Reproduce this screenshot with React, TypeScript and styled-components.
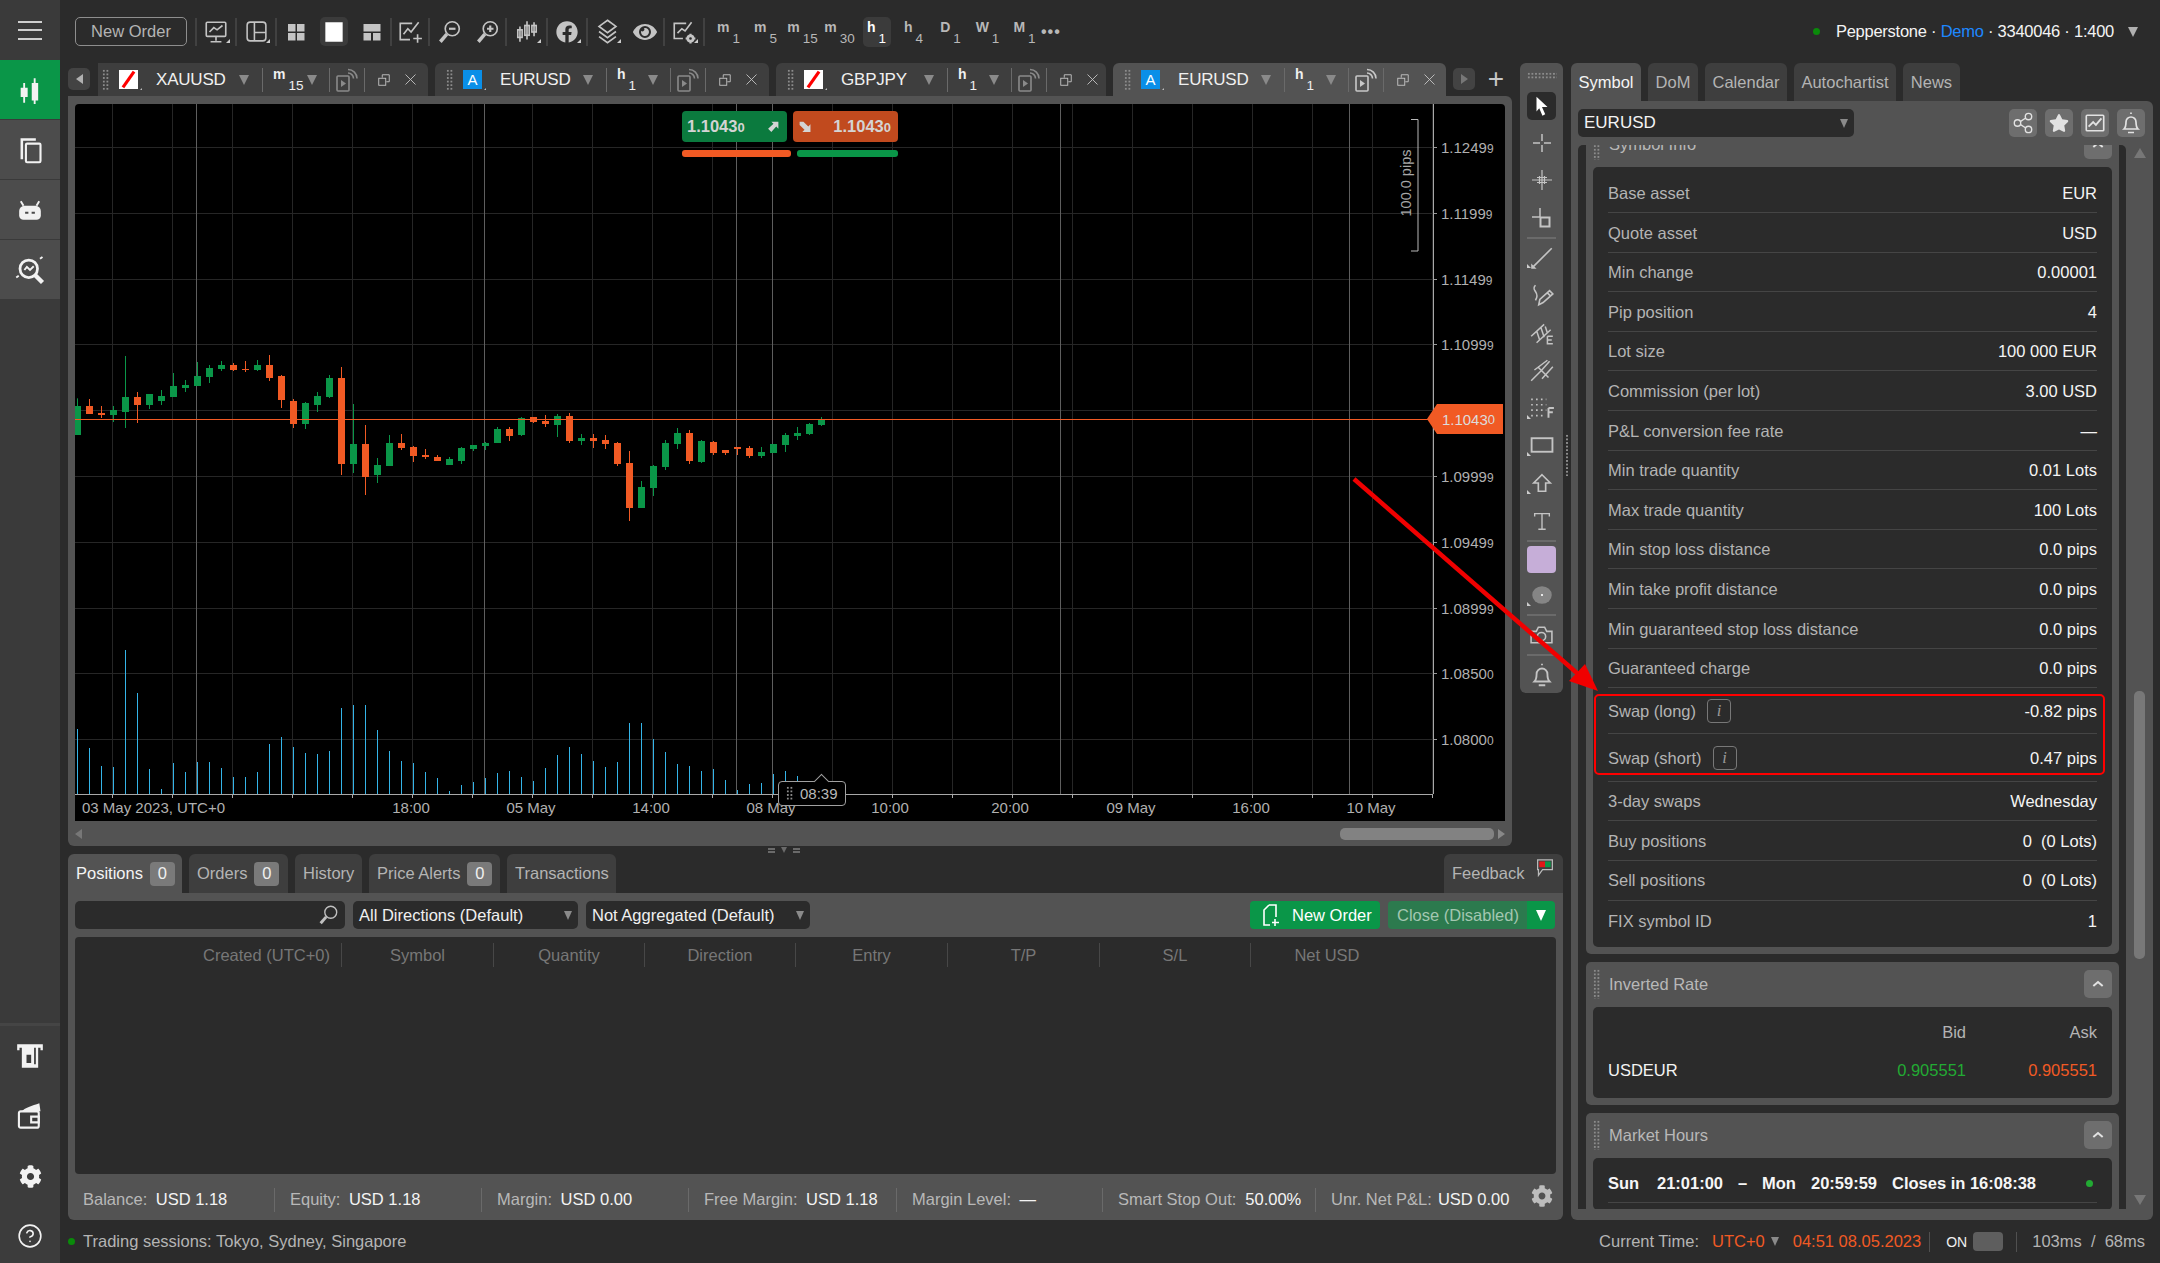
import type { ReactNode } from "react";
import styled, { createGlobalStyle } from "styled-components";
import { FaCog, FaEye, FaFacebook, FaStar } from "react-icons/fa";
import { CircleHelp } from "lucide-react";

const GlobalStyle = createGlobalStyle`
  html, body { margin: 0; padding: 0; background: #2b2b2b; }
  * { box-sizing: border-box; }
  body { font-family: "Liberation Sans", Arial, sans-serif; font-size: 16.5px; color: #b4b4b4; }
`;

const GREEN = "#0a9648";
const ORANGE = "#f15a24";
const PANEL = "#535353";
const DARK = "#2b2b2b";
const TAB = "#3e3e3e";

const Page = styled.div`
  position: relative;
  display: flex;
  width: 2160px;
  height: 1263px;
  overflow: hidden;
  background: ${DARK};
`;

const Overlay = styled.svg`
  position: absolute;
  left: 0;
  top: 0;
  pointer-events: none;
`;

/* ---------- left rail ---------- */
const Rail = styled.nav`
  display: flex;
  flex-direction: column;
  flex: 0 0 60px;
  background: #3a3a3a;
`;
const RailCell = styled.div<{ $bg?: string }>`
  display: flex;
  align-items: center;
  justify-content: center;
  height: 60px;
  color: #f2f2f2;
  background: ${({ $bg }) => $bg ?? "transparent"};
  border-bottom: ${({ $bg }) => ($bg ? "1px solid #3a3a3a" : "none")};
`;
const RailBottom = styled.div`
  margin-top: auto;
  height: 240px;
  border-top: 3px solid #454545;
  background: #3c3c3c;
`;
const Burger = styled.div`
  width: 24px;
  height: 19px;
  border-top: 2px solid #cfcfcf;
  border-bottom: 2px solid #cfcfcf;
  background: linear-gradient(#cfcfcf, #cfcfcf) center / 100% 2px no-repeat;
`;

const Main = styled.div`
  display: flex;
  flex-direction: column;
  flex: 1;
  min-width: 0;
`;

/* ---------- top bar ---------- */
const TopBar = styled.header`
  display: flex;
  align-items: center;
  flex: 0 0 60px;
  padding: 3px 0 0 15px;
`;
const OutlineButton = styled.div`
  display: flex;
  align-items: center;
  justify-content: center;
  flex: 0 0 112px;
  height: 29px;
  margin-right: 8px;
  border: 1px solid #8e8e8e;
  border-radius: 5px;
  color: #b4b4b4;
`;
const ToolSep = styled.span`
  flex: 0 0 2px;
  height: 28px;
  background: #414141;
`;
const ToolIcon = styled.div<{ $w: number; $on?: boolean; $more?: boolean }>`
  position: relative;
  display: flex;
  align-items: center;
  justify-content: center;
  flex: 0 0 ${({ $w }) => $w}px;
  height: 29px;
  color: ${({ $on }) => ($on ? "#ffffff" : "#c4c4c4")};
  ${({ $more }) =>
    $more &&
    `&::after {
      content: "";
      position: absolute;
      right: 5px;
      bottom: 3px;
      border: 2px solid transparent;
      border-right-color: #ccc;
      border-bottom-color: #ccc;
    }`}
  ${({ $on }) =>
    $on &&
    `&::before {
      content: "";
      position: absolute;
      left: 5px;
      right: 5px;
      top: 0;
      bottom: 0;
      border-radius: 5px;
      background: #3b3b3b;
    }
    & > * { position: relative; }`}
`;
const TfRow = styled.div`
  display: flex;
  margin-left: 5px;
`;
const TfCell = styled.div`
  display: flex;
  justify-content: center;
  flex: 0 0 37px;
`;
const TfBox = styled.div<{ $on?: boolean }>`
  display: flex;
  align-items: flex-start;
  justify-content: center;
  width: 28px;
  height: 30px;
  padding-top: 3px;
  border-radius: 5px;
  background: ${({ $on }) => ($on ? "#3b3b3b" : "transparent")};
  color: ${({ $on }) => ($on ? "#ffffff" : "#b8b8b8")};
`;
const TfLetter = styled.span`
  font-size: 14px;
  line-height: 14px;
  font-weight: 700;
`;
const TfNumber = styled.span`
  margin: 12px 0 0 3px;
  font-size: 13.5px;
  line-height: 14px;
`;
const Dots = styled.span`
  margin-left: -2px;
  font-size: 16px;
  font-weight: 700;
  letter-spacing: 1px;
  color: #b8b8b8;
`;
const Account = styled.div`
  display: flex;
  align-items: center;
  gap: 14px;
  margin-left: auto;
  padding-right: 22px;
  color: #f4f4f4;
`;
const AccountText = styled.span`
  margin-left: 2px;
  letter-spacing: -0.25px;
`;
const LiveDot = styled.span<{ $c?: string }>`
  flex: 0 0 auto;
  width: 7px;
  height: 7px;
  border-radius: 50%;
  background: ${({ $c }) => $c ?? "#0a8a0a"};
`;
const Link = styled.span`
  color: #1e88ff;
`;
const Caret = styled.span<{ $c?: string; $s?: number }>`
  flex: 0 0 auto;
  width: 0;
  height: 0;
  border-left: ${({ $s }) => ($s ?? 10) / 2}px solid transparent;
  border-right: ${({ $s }) => ($s ?? 10) / 2}px solid transparent;
  border-top: ${({ $s }) => $s ?? 10}px solid ${({ $c }) => $c ?? "#8a8a8a"};
`;

/* ---------- body ---------- */
const Body = styled.div`
  display: flex;
  flex: 1;
  min-height: 0;
  padding: 3px 7px 0 8px;
`;
const LeftColumn = styled.div`
  display: flex;
  flex-direction: column;
  flex: 0 0 1495px;
`;
const Upper = styled.div`
  display: flex;
  align-items: flex-start;
  gap: 8px;
  flex: 0 0 783px;
`;
const ChartArea = styled.section`
  display: flex;
  flex-direction: column;
  flex: 0 0 1444px;
  height: 783px;
`;
const ChartTabs = styled.div`
  display: flex;
  align-items: flex-end;
  flex: 0 0 33px;
  gap: 7px;
`;
const Pager = styled.div<{ $left?: boolean }>`
  display: flex;
  align-items: center;
  justify-content: center;
  flex: 0 0 22px;
  height: 22px;
  margin: 0 ${({ $left }) => ($left ? 1 : 0)}px 6px 0;
  border-radius: 5px;
  background: #434343;
  &::before {
    content: "";
    border-top: 5px solid transparent;
    border-bottom: 5px solid transparent;
    ${({ $left }) =>
      $left ? "border-right: 7px solid #b0b0b0;" : "border-left: 7px solid #777;"}
  }
`;
const ChartTab = styled.div<{ $w: number; $on?: boolean; $first?: boolean }>`
  display: flex;
  align-items: center;
  flex: 0 0 ${({ $w }) => $w}px;
  height: 33px;
  padding-left: ${({ $first }) => ($first ? 4 : 11)}px;
  border-radius: ${({ $first }) => ($first ? "0 6px 0 0" : "6px 6px 0 0")};
  background: ${({ $on }) => ($on ? PANEL : TAB)};
  color: #f0f0f0;
`;
const Grip = styled.span<{ $w: number; $h: number }>`
  flex: 0 0 auto;
  width: ${({ $w }) => $w}px;
  height: ${({ $h }) => $h}px;
  background-image: radial-gradient(circle, #8c8c8c 1.1px, transparent 1.4px);
  background-size: 3.6px 3.6px;
`;
const SymbolIcon = styled.span<{ $blue?: boolean }>`
  position: relative;
  display: flex;
  align-items: center;
  justify-content: center;
  flex: 0 0 19px;
  height: 19px;
  margin-left: 10px;
  font-size: 15px;
  color: #fff;
  background: ${({ $blue }) => ($blue ? "#0a8fe8" : "#fff")};
  &::after {
    content: "";
    position: absolute;
    right: -4px;
    bottom: -1px;
    border: 1.5px solid transparent;
    border-right-color: #bbb;
    border-bottom-color: #bbb;
  }
`;
const TabName = styled.div`
  display: flex;
  align-items: center;
  justify-content: space-between;
  flex: 0 0 106px;
  margin-left: 18px;
  padding-right: 13px;
  font-size: 17px;
  letter-spacing: -0.2px;
`;
const TabSep = styled.span`
  flex: 0 0 1px;
  height: 24px;
  background: #6a6a6a;
`;
const TabTf = styled.div<{ $w: number }>`
  display: flex;
  align-items: center;
  justify-content: space-between;
  flex: 0 0 ${({ $w }) => $w}px;
  padding: 0 12px 0 10px;
  & > div { width: auto; padding-top: 0; color: #f0f0f0; background: transparent; height: 26px; }
`;
const TabIcon = styled.span<{ $w: number; $dim?: boolean }>`
  display: flex;
  align-items: center;
  justify-content: center;
  flex: 0 0 ${({ $w }) => $w}px;
  color: ${({ $dim }) => ($dim ? "#8a8a8a" : "#c8c8c8")};
`;
const TabPlus = styled.div`
  display: flex;
  align-items: center;
  justify-content: center;
  flex: 0 0 30px;
  height: 22px;
  margin: 0 0 6px -1px;
  font-size: 28px;
  font-weight: 300;
  color: #c8c8c8;
`;

const ChartPanel = styled.div`
  display: flex;
  flex-direction: column;
  flex: 1;
  padding: 8px 7px 0;
  border-radius: 0 6px 6px 6px;
  background: ${PANEL};
`;
const ChartCanvas = styled.div`
  position: relative;
  flex: 0 0 717px;
  background: #000;
  border-radius: 4px 4px 0 0;
  overflow: hidden;
`;
const ChartSvg = styled.svg`
  display: block;
`;
const HScroll = styled.div`
  display: flex;
  align-items: center;
  flex: 1;
`;
const ScrollArrow = styled.span<{ $dir: "l" | "r" | "u" | "d" }>`
  flex: 0 0 auto;
  width: 0;
  height: 0;
  border: 5px solid transparent;
  ${({ $dir }) =>
    $dir === "l"
      ? "border-right: 7px solid #777; border-left-width: 0;"
      : $dir === "r"
        ? "border-left: 7px solid #888; border-right-width: 0;"
        : $dir === "u"
          ? "border-bottom: 10px solid #777; border-top-width: 0; border-left-width: 6px; border-right-width: 6px;"
          : "border-top: 10px solid #777; border-bottom-width: 0; border-left-width: 6px; border-right-width: 6px;"}
`;
const HThumb = styled.span`
  width: 154px;
  height: 12px;
  margin: 0 4px 0 auto;
  border-radius: 5px;
  background: #828282;
`;

const Quote = styled.div<{ $side: "buy" | "sell" }>`
  position: absolute;
  top: 7px;
  left: ${({ $side }) => ($side === "buy" ? 607 : 718)}px;
  display: flex;
  align-items: center;
  justify-content: space-between;
  width: 105px;
  height: 31px;
  padding: 0 7px 0 5px;
  border-radius: 4px;
  background: ${({ $side }) => ($side === "buy" ? "#0b7a3e" : "#c14a1e")};
  color: #d4d4d4;
  font-weight: 700;
  font-size: 16.5px;
`;
const Tiny = styled.span`
  font-size: 13px;
`;
const QuoteBar = styled.span<{ $left: number; $w: number; $c: string }>`
  position: absolute;
  top: 46px;
  left: ${({ $left }) => $left}px;
  width: ${({ $w }) => $w}px;
  height: 7px;
  border-radius: 3px;
  background: ${({ $c }) => $c};
`;
const PriceTag = styled.div`
  position: absolute;
  left: 1352px;
  top: 300px;
  display: flex;
  align-items: center;
  justify-content: flex-end;
  width: 76px;
  height: 30px;
  padding-right: 8px;
  background: ${ORANGE};
  clip-path: polygon(0 50%, 10px 0, 100% 0, 100% 100%, 10px 100%);
  color: #dcdcdc;
  font-size: 15px;
`;
const TimeTip = styled.div`
  position: absolute;
  left: 703px;
  top: 677px;
  display: flex;
  align-items: center;
  gap: 6px;
  width: 68px;
  height: 25px;
  padding-left: 7px;
  border: 1px solid #a0a0a0;
  border-radius: 4px;
  background: #000;
  color: #b8b8b8;
  font-size: 15px;
  &::before {
    content: "";
    position: absolute;
    left: 37px;
    top: -6px;
    width: 10px;
    height: 10px;
    background: #000;
    border-left: 1px solid #a0a0a0;
    border-top: 1px solid #a0a0a0;
    transform: rotate(45deg);
  }
`;

/* ---------- drawing tools ---------- */
const ToolColumn = styled.aside`
  display: flex;
  flex-direction: column;
  align-items: center;
  flex: 0 0 43px;
  height: 630px;
  padding-top: 9px;
  border-radius: 6px;
  background: ${PANEL};
`;
const DrawTool = styled.div<{ $more?: boolean }>`
  position: relative;
  display: flex;
  align-items: center;
  justify-content: center;
  flex: 0 0 37.6px;
  width: 29px;
  color: #c4c4c4;
  ${({ $more }) =>
    $more &&
    `&::after {
      content: "";
      position: absolute;
      left: 0;
      bottom: 8px;
      border: 2.5px solid transparent;
      border-left-color: #ccc;
      border-bottom-color: #ccc;
    }`}
`;
const ActiveTool = styled.div`
  display: flex;
  align-items: center;
  justify-content: center;
  flex: 0 0 28px;
  width: 29px;
  margin: 12px 0 4px;
  border-radius: 5px;
  background: ${DARK};
  color: #fff;
`;
const DrawSep = styled.span`
  flex: 0 0 2px;
  width: 29px;
  background: #6a6a6a;
`;
const Swatch = styled.span`
  flex: 0 0 27px;
  width: 29px;
  margin: 4px 0;
  border-radius: 4px;
  background: #c6aed8;
`;

/* ---------- bottom panel ---------- */
const Splitter = styled.div`
  display: flex;
  align-items: center;
  justify-content: center;
  gap: 6px;
  flex: 0 0 8px;
  padding-right: 64px;
  & > i {
    width: 7px;
    height: 5px;
    border-top: 2px solid #6a6a6a;
    border-bottom: 2px solid #6a6a6a;
  }
`;
const BottomTabs = styled.div`
  display: flex;
  align-items: flex-end;
  flex: 0 0 39px;
  gap: 7px;
`;
const BottomTab = styled.div<{ $w: number; $on?: boolean; $end?: boolean }>`
  display: flex;
  align-items: center;
  flex: 0 0 ${({ $w }) => $w}px;
  gap: 7px;
  height: 39px;
  padding-left: 8px;
  margin-left: ${({ $end }) => ($end ? "auto" : 0)};
  border-radius: 6px 6px 0 0;
  background: ${({ $on }) => ($on ? PANEL : TAB)};
  color: ${({ $on }) => ($on ? "#f4f4f4" : "#b4b4b4")};
`;
const FeedbackIcon = styled.svg`
  margin: -12px 0 0 5px;
`;
const Badge = styled.span`
  display: flex;
  align-items: center;
  justify-content: center;
  width: 25px;
  height: 24px;
  border-radius: 4px;
  background: #7a7a7a;
  color: #f0f0f0;
`;
const BottomPanel = styled.section`
  display: flex;
  flex-direction: column;
  flex: 1;
  border-radius: 0 0 6px 6px;
  background: ${PANEL};
`;
const FilterBar = styled.div`
  display: flex;
  align-items: center;
  gap: 8px;
  flex: 0 0 44px;
  padding: 0 8px 0 7px;
`;
const DarkField = styled.div<{ $w: number }>`
  display: flex;
  align-items: center;
  justify-content: space-between;
  flex: 0 0 ${({ $w }) => $w}px;
  height: 28px;
  padding: 0 6px;
  border-radius: 5px;
  background: ${DARK};
  color: #f0f0f0;
`;
const SearchMark = styled.span`
  display: flex;
  color: #c0c0c0;
`;
const GreenButton = styled.div`
  display: flex;
  align-items: center;
  gap: 8px;
  flex: 0 0 130px;
  height: 28px;
  margin-left: auto;
  padding-left: 10px;
  border-radius: 4px;
  background: ${GREEN};
  color: #fff;
`;
const CloseGroup = styled.div`
  display: flex;
  flex: 0 0 167px;
  height: 28px;
  border-radius: 4px;
  overflow: hidden;
`;
const CloseLabel = styled.div`
  display: flex;
  align-items: center;
  flex: 1;
  padding-left: 9px;
  background: #2c7a4e;
  color: #a3c7b1;
`;
const CloseCaret = styled.div`
  display: flex;
  align-items: center;
  justify-content: center;
  flex: 0 0 28px;
  background: ${GREEN};
`;
const PositionsTable = styled.div`
  flex: 1;
  margin: 0 7px;
  padding-top: 6px;
  border-radius: 4px;
  background: ${DARK};
`;
const TableHead = styled.div`
  display: flex;
  height: 24px;
`;
const HeadCell = styled.div<{ $w: number; $right?: boolean; $last?: boolean }>`
  display: flex;
  align-items: center;
  justify-content: ${({ $right }) => ($right ? "flex-end" : "center")};
  flex: 0 0 ${({ $w }) => $w}px;
  padding-right: ${({ $right }) => ($right ? 11 : 0)}px;
  border-right: ${({ $last }) => ($last ? "none" : "1px solid #474747")};
  color: #777;
`;
const Stats = styled.div`
  display: flex;
  align-items: center;
  flex: 0 0 46px;
  padding: 5px 0 0 15px;
`;
const Stat = styled.div<{ $w: number; $gap?: number; $last?: boolean }>`
  display: flex;
  align-items: center;
  gap: ${({ $gap }) => $gap ?? 8.5}px;
  flex: 0 0 ${({ $w }) => $w}px;
  height: 24px;
  margin-right: ${({ $last }) => ($last ? 0 : 15)}px;
  border-right: ${({ $last }) => ($last ? "none" : "1px solid #6a6a6a")};
  color: #b8b8b8;
  & > b {
    font-weight: 400;
    color: #f4f4f4;
  }
`;
const StatGear = styled.span`
  display: flex;
  margin: -8px 0 0 1px;
  color: #bdbdbd;
`;

/* ---------- right panel ---------- */
const Gutter = styled.div`
  flex: 0 0 8px;
  display: flex;
  justify-content: center;
  padding-top: 371px;
`;
const RightColumn = styled.aside`
  display: flex;
  flex-direction: column;
  flex: 0 0 582px;
`;
const SideTabs = styled.div`
  display: flex;
  gap: 7px;
  flex: 0 0 38px;
`;
const SideTab = styled.div<{ $w: number; $on?: boolean }>`
  display: flex;
  align-items: center;
  justify-content: center;
  flex: 0 0 ${({ $w }) => $w}px;
  border-radius: 6px 6px 0 0;
  background: ${({ $on }) => ($on ? PANEL : TAB)};
  color: ${({ $on }) => ($on ? "#f4f4f4" : "#b4b4b4")};
`;
const SidePanel = styled.div`
  display: flex;
  flex-direction: column;
  height: 1119px;
  border-radius: 0 6px 6px 6px;
  background: ${PANEL};
`;
const SideHead = styled.div`
  display: flex;
  align-items: center;
  flex: 0 0 44px;
  padding: 0 8px 0 7px;
`;
const SymbolSelect = styled(DarkField)`
  margin-right: auto;
  color: #f4f4f4;
  font-size: 17px;
`;
const SquareButton = styled.div`
  display: flex;
  align-items: center;
  justify-content: center;
  width: 28px;
  height: 28px;
  margin-left: 8px;
  border-radius: 5px;
  background: #6e6e6e;
  color: #e2e2e2;
`;
const ScrollWrap = styled.div`
  display: flex;
  height: 1064px;
  padding-left: 7px;
`;
const ScrollBody = styled.div`
  flex: 0 0 548px;
  padding: 0 7px 0 8px;
  border-radius: 5px 5px 0 0;
  background: ${DARK};
  overflow: hidden;
`;
const VScroll = styled.div`
  position: relative;
  display: flex;
  flex-direction: column;
  align-items: center;
  flex: 1;
  padding-top: 3px;
  & > span:last-child { position: absolute; bottom: 4px; }
`;
const VThumb = styled.span`
  position: absolute;
  top: 546px;
  width: 11px;
  height: 268px;
  border-radius: 5px;
  background: #787878;
`;
const Section = styled.section<{ $pull?: boolean }>`
  margin: ${({ $pull }) => ($pull ? "-23px 0 8px" : "0 0 8px")};
  padding: 0 7px 7px;
  border-radius: 5px;
  background: ${PANEL};
`;
const SectionHead = styled.div`
  display: flex;
  align-items: center;
  height: 45px;
  color: #b8b8b8;
`;
const SectionGrip = styled(Grip)`
  margin-right: 8px;
`;
const Chevron = styled(SquareButton)`
  margin-left: auto;
`;
const SectionBody = styled.div`
  padding: 6.5px 15px 6.5px;
  border-radius: 5px;
  background: ${DARK};
`;
const Row = styled.div<{ $h?: number; $flat?: boolean }>`
  display: flex;
  align-items: center;
  justify-content: space-between;
  height: ${({ $h }) => $h ?? 39.6}px;
  padding-top: 1.5px;
  border-bottom: ${({ $flat }) => ($flat ? "none" : "1.5px solid #454545")};
  color: #b4b4b4;
  & > b {
    font-weight: 400;
    color: #f4f4f4;
  }
`;
const RowLabel = styled.span`
  display: flex;
  align-items: center;
  gap: 11px;
`;
const InfoBox = styled.span`
  display: flex;
  align-items: center;
  justify-content: center;
  width: 24px;
  height: 24px;
  border: 1.5px solid #787878;
  border-radius: 4px;
  font-family: "Liberation Serif", serif;
  font-style: italic;
  color: #9a9a9a;
`;
const Highlight = styled.div`
  position: relative;
  &::after {
    content: "";
    position: absolute;
    left: -14px;
    right: -8px;
    top: 6px;
    bottom: 6.5px;
    border: 2.5px solid #ff0000;
    border-radius: 5px;
    pointer-events: none;
  }
`;
const RateGrid = styled.div`
  display: grid;
  grid-template-columns: 1fr 131px 131px;
  grid-auto-rows: 38px;
  align-items: center;
  height: 76px;
  margin-bottom: 2px;
  text-align: right;
`;
const RateName = styled.span`
  text-align: left;
  color: #f4f4f4;
`;
const Rate = styled.span<{ $c: string }>`
  color: ${({ $c }) => $c};
`;
const HoursRow = styled.div`
  display: flex;
  align-items: center;
  height: 39px;
  border-bottom: 1.5px solid #454545;
  color: #f6f6f6;
  font-weight: 700;
`;
const HoursCell = styled.span<{ $w?: number }>`
  flex: 0 0 ${({ $w }) => ($w ? `${$w}px` : "auto")};
  white-space: nowrap;
`;
const HoursDot = styled(LiveDot)`
  margin: 0 4px 0 auto;
`;

/* ---------- status bar ---------- */
const StatusBar = styled.footer`
  display: flex;
  align-items: center;
  flex: 0 0 43px;
  padding: 0 15px 0 8px;
  color: #b4b4b4;
`;
const StatusText = styled.span`
  margin-left: 8px;
`;
const StatusRight = styled.div`
  display: flex;
  align-items: center;
  margin-left: auto;
`;
const Hot = styled.span<{ $ml?: number }>`
  margin-left: ${({ $ml }) => $ml ?? 0}px;
  color: ${ORANGE};
`;
const ZoneCaret = styled(Caret)`
  margin: 0 14px 0 6px;
`;
const StatusSep = styled.span<{ $l: number; $r: number }>`
  width: 1px;
  height: 20px;
  margin: 0 ${({ $r }) => $r}px 0 ${({ $l }) => $l}px;
  background: #505050;
`;
const OnLabel = styled.span`
  font-size: 14px;
  color: #f0f0f0;
`;
const Toggle = styled.span`
  width: 30px;
  height: 19px;
  margin-left: 6px;
  border-radius: 4px;
  background: #5e5e5e;
`;

/* ---------- glyphs ---------- */
const F = { fill: "currentColor", stroke: "none" };
const glyphs: Record<string, ReactNode> = {
  monitor: <><rect x="3" y="3" width="18" height="13" rx="1" /><path d="M6 12l4-4 3 2 5-4M12 16v4M7 21h10" /></>,
  layout: <><rect x="3" y="3" width="18" height="18" rx="3" /><path d="M10 3v18M10 13h11" /></>,
  grid: <path {...F} d="M4 4h7.5v7.5H4zM13 4h7.5v7.5H13zM4 13h7.5v7.5H4zM13 13h7.5v7.5H13z" />,
  single: <path {...F} d="M4 3h16v18H4z" />,
  split: <path {...F} d="M3.5 4h17v7.5h-17zM3.5 13h7.5v7.5H3.5zM13 13h7.5v7.5H13z" />,
  chartadd: <path d="M14 4H3v15h9M6 14l4-5 3 3 7-9M19 14v8M15 18h8" />,
  zoomout: <><circle cx="15" cy="9" r="6.5" /><path d="M10 14l-6 7" strokeWidth="3.2" /><path d="M12 9h6" strokeWidth="2" /></>,
  zoomin: <><circle cx="15" cy="9" r="6.5" /><path d="M10 14l-6 7" strokeWidth="3.2" /><path d="M12 9h6M15 6v6" strokeWidth="2" /></>,
  candles: <><path d="M5.5 7v14M12 2v17M18.5 3v13" /><rect x="3.5" y="10" width="4" height="7" /><rect x="10" y="6" width="4" height="9" /><rect x="16.5" y="6" width="4" height="6" /></>,
  layers: <path d="M12 2l7.5 5.5-7.5 5.5-7.5-5.5zM4.5 12l7.5 5.5 7.5-5.5M4.5 16.5l7.5 5.5 7.5-5.5" />,
  chartgear: <><path d="M14 4H3v14h8M6 13l4-4 3 2 6-8" /><circle cx="18" cy="18" r="2.5" strokeWidth="2.5" /><path d="M18 13.5v1.5M18 21v1.5M13.5 18h1.5M21 18h1.5" strokeWidth="2" /></>,
  railcandles: <><path d="M7 6v17M16 2v22" strokeWidth="1.6" /><path {...F} d="M4 10h6v8H4zM13.5 6h5.5v15h-5.5z" /></>,
  pages: <><path d="M17 3H5v17" strokeWidth="2.2" /><rect x="8.5" y="6.5" width="12.5" height="16" rx="1" strokeWidth="1.8" /></>,
  robot: <><path {...F} d="M7 8h10a5 5 0 0 1 5 5v4a4 4 0 0 1-4 4H6a4 4 0 0 1-4-4v-4a5 5 0 0 1 5-5z" /><path d="M6 8L3.5 4M18 8l2.5-4" strokeWidth="1.8" /><path d="M7.5 14.5h3M13.5 14.5h3" stroke="#4b4b4b" strokeWidth="2" /></>,
  analyze: <><circle cx="11" cy="11" r="7" strokeWidth="2.2" /><path d="M16 16l6 6" strokeWidth="3.5" /><path d="M7.5 12l2-2.5 2.5 2.5 3-3M1 18l2-1.5M20 3l2-1.5" strokeWidth="1.5" /></>,
  atm: <path {...F} d="M1 2h22v5h-2V5h-2v17H5V5H3v2H1zM9 11v7h4v-7zM15.5 5v14h1.5V5z" />,
  wallet: <><rect x="2.5" y="8" width="17" height="14" rx="1.5" strokeWidth="1.8" /><path d="M13 12.5h6.5v5H13z" strokeWidth="1.8" /><path {...F} d="M5 8c2-3 9-5 15-7l1 7z" /></>,
  search: <><circle cx="15" cy="9" r="6.5" /><path d="M10 14l-6 7" strokeWidth="3.2" /></>,
  cursor: <path {...F} d="M6 2l12 11h-6l3.5 8-3 1.5L9 14.5 6 18z" />,
  cross: <path d="M12 3v7M12 14v7M3 12h7M14 12h7" />,
  crossdense: <path d="M12 2v20M2 12h20M9.5 8v8M14.5 8v8M7 9.5h10M7 14.5h10" strokeWidth="1.2" />,
  measure: <><path d="M10 2v9M2 11h8" /><rect x="10.5" y="11.5" width="9" height="9" strokeWidth="2" /></>,
  line: <><path d="M21 3L4 20" /><path {...F} d="M2 22v-5l5 5z" /></>,
  pencil: <path d="M6 3c-5 5 5 6 0 14M9 21l1-5 9-8 3 3-9 8zM17 10l3 3" />,
  fib: <path d="M2 15L14 4M7 21L20 9M7 10l3 9M11 7l3 9M15 6l2 6M17 15h5M17 15v7h5M17 18.5h4" strokeWidth="1.4" />,
  fork: <path d="M2 22l9-9M11 13l8-9M8 9l10 10M5 12L17 3M12 20L22 9" strokeWidth="1.4" />,
  gridf: <><path d="M2 4h14M2 9h14M2 14h14M2 19h12" strokeDasharray="1.5 3" strokeWidth="1.5" /><path d="M18 12v9M18 12h5M18 16h4" strokeWidth="1.8" /></>,
  rect: <rect x="2.5" y="5" width="20" height="13" strokeWidth="1.8" />,
  up: <path d="M12 3l9 9h-5v9H8v-9H3z" strokeWidth="1.8" />,
  text: <path d="M4 7V4h16v3M12 4v17M8 21h8" />,
  marker: <><ellipse cx="12" cy="12" rx="9" ry="8" {...F} opacity="0.45" /><circle cx="12" cy="12" r="1" fill="#fff" stroke="none" /></>,
  camera: <><path d="M2 9h5l2-4h6l2 4h5v11H2z" /><circle cx="12" cy="14" r="4" /></>,
  bell: <path d="M5 18c2-2 2-4 2-7a5 5 0 0 1 10 0c0 3 0 5 2 7zM12 3V1.5M9 21.5h6" strokeWidth="1.7" />,
  popout: <><path d="M9 8V3h12v12h-5" /><rect x="3" y="9" width="12" height="12" /></>,
  close: <path d="M4 4l16 16M20 4L4 20" strokeWidth="1.4" />,
  signal: <><rect x="2" y="8" width="12" height="15" rx="1" strokeWidth="1.6" /><path {...F} d="M6 12l5 3.5-5 3.5z" /><path d="M13 1.5a9 9 0 0 1 9 9M13 5a5.5 5.5 0 0 1 5.5 5.5" strokeWidth="1.6" /></>,
  share: <><circle cx="6" cy="12" r="3.5" /><circle cx="18" cy="5" r="3.5" /><circle cx="18" cy="19" r="3.5" /><path d="M9 10.5l6-4M9 13.5l6 4" /></>,
  chartbox: <><rect x="2.5" y="3.5" width="19" height="17" rx="1" strokeWidth="1.8" /><path d="M5 16l5-5 3 3 6-7" strokeWidth="2" /></>,
  slash: <path d="M5 22L19 2" stroke="#ff0000" strokeWidth="4" />,
  neworder: <path d="M9 2h7v12M9 2L4 7v15h6M15 16v7M12 19.5h7" strokeWidth="1.6" />,
  chevron: <path d="M5 15l7-6 7 6" strokeWidth="3" />,
  arrowne: <path {...F} d="M8 3h13v13l-4-4-9 10-6-6 10-9z" />,
  arrowsw: <path {...F} d="M3 3l7 0 9 9 4-4v14H8l4-4-9-9z" />,
};

const Glyph = ({ n, s = 24, sw = 1.5 }: { n: string; s?: number; sw?: number }) => (
  <svg width={s} height={s} viewBox="0 0 24 24" fill="none" stroke="currentColor" strokeWidth={sw}>
    {glyphs[n]}
  </svg>
);

const Tf = ({ l, n, on }: { l: string; n: string; on?: boolean }) => (
  <TfBox $on={on}>
    <TfLetter>{l}</TfLetter>
    <TfNumber>{n}</TfNumber>
  </TfBox>
);

/* ---------- chart data ---------- */
type Candle = [number, number, number, number, number];
// high, body top, body bottom, low, up
const candles: Candle[] = [
  [175,198,285,285,1],[177,198,222,222,0],[198,219,225,234,0],[198,210,225,246,1],[48,171,216,264,1],
  [156,171,195,249,0],[162,162,195,207,1],[150,168,183,195,1],[99,138,171,171,1],[120,135,144,156,1],
  [66,108,138,138,1],[75,84,111,129,1],[63,75,87,93,1],[69,75,90,93,0],[63,87,90,96,0],
  [60,75,90,93,1],[45,75,114,123,0],[105,108,180,204,0],[177,183,252,264,0],[186,189,252,267,1],
  [156,168,195,216,1],[105,114,171,174,1],[81,114,372,405,0],[192,312,372,399,1],[255,312,411,465,0],
  [354,375,405,429,1],[285,309,378,378,1],[282,309,324,330,0],[318,321,348,366,0],[327,345,351,357,0],
  [345,351,363,363,0],[351,357,375,375,1],[321,324,363,372,1],[315,315,327,333,1],[306,309,318,330,1],
  [261,267,309,309,1],[261,267,288,303,0],[231,234,285,288,1],[231,231,246,249,0],[225,243,252,261,0],
  [222,228,255,291,1],[219,228,303,309,0],[282,294,303,315,1],[282,294,303,324,0],[285,300,312,327,0],
  [306,309,372,378,0],[333,369,504,543,0],[423,441,504,504,1],[375,378,444,468,1],[300,309,381,390,1],
  [264,279,312,327,1],[270,279,363,372,0],[300,303,366,369,1],[303,306,339,345,0],[330,330,339,345,0],
  [321,321,327,345,0],[318,324,348,354,0],[321,336,348,354,1],[312,312,339,339,1],[279,285,315,336,1],
  [261,279,288,300,1],[249,252,282,285,1],[231,240,255,258,1],
];
const volumes = [
  297,354,408,411,60,189,417,477,399,426,396,396,414,441,441,426,342,321,351,369,372,363,234,225,225,
  300,363,393,399,426,444,483,465,456,444,429,423,441,453,414,375,351,372,393,411,396,279,279,327,366,
  402,408,423,417,450,480,462,459,432,423,438,
];
const candleX = (i: number) => Math.round(76.8 + i * 12.01) + 0.5;
const candleY = (v: number) => 340 + v / 3;
const volY = (v: number) => 630 + v / 3;

const hLines: [number, string, string][] = [
  [147.5, "1.1249", "9"], [213.5, "1.1199", "9"], [279.5, "1.1149", "9"], [344.5, "1.1099", "9"], [410.5, "", ""],
  [476.5, "1.0999", "9"], [542.5, "1.0949", "9"], [608.5, "1.0899", "9"], [673.5, "1.0850", "0"], [739.5, "1.0800", "0"],
];
const timeLabels: [number, string][] = [
  [411, "18:00"], [531, "05 May"], [651, "14:00"], [771, "08 May"], [890, "10:00"],
  [1010, "20:00"], [1131, "09 May"], [1251, "16:00"], [1371, "10 May"],
];
const dimLines = Array.from({ length: 23 }, (_, i) => 112.5 + i * 60);
const brightLines = [196.5, 484.5, 736.5, 772.5, 1060.5, 1349.5];

const PriceChart = () => (
  <ChartSvg width={1430} height={717} viewBox="75 104 1430 717" fontFamily="Liberation Sans, Arial, sans-serif">
    {dimLines.map((x) => (
      <line key={x} x1={x} x2={x} y1={104} y2={794} stroke="#262626" />
    ))}
    {hLines.map(([y]) => (
      <g key={y}>
        <line x1={75} x2={1433} y1={y} y2={y} stroke="#262626" />
        <line x1={1433} x2={1437} y1={y} y2={y} stroke="#999" />
      </g>
    ))}
    {brightLines.map((x) => (
      <line key={x} x1={x} x2={x} y1={104} y2={794} stroke="#5e5e5e" />
    ))}
    {volumes.map((v, i) => (
      <line key={i} x1={candleX(i)} x2={candleX(i)} y1={volY(v)} y2={794} stroke="#34b4e8" />
    ))}
    {candles.map(([h, t, b, l, up], i) => {
      const c = up ? GREEN : ORANGE;
      const x = candleX(i);
      return (
        <g key={i}>
          <line x1={x} x2={x} y1={candleY(h)} y2={candleY(l)} stroke={c} />
          <rect x={x - 3.5} y={candleY(t)} width={7} height={Math.max(candleY(b) - candleY(t), 1)} fill={c} />
        </g>
      );
    })}
    <line x1={75} x2={1433} y1={419.5} y2={419.5} stroke={ORANGE} />
    <line x1={75} x2={1433} y1={794.5} y2={794.5} stroke="#a8a8a8" />
    <line x1={1433.5} x2={1433.5} y1={104} y2={794} stroke="#a8a8a8" />
    {dimLines.filter((x) => x < 1433).map((x) => (
      <line key={x} x1={x} x2={x} y1={794} y2={798} stroke="#a8a8a8" />
    ))}
    {hLines.map(([y, t, d]) =>
      t ? (
        <text key={t} x={1441} y={y + 5} fill="#b0b0b0" fontSize="15">
          {t}
          <tspan fontSize="12">{d}</tspan>
        </text>
      ) : null,
    )}
    <text x={82} y={813} fill="#b0b0b0" fontSize="15">03 May 2023, UTC+0</text>
    {timeLabels.map(([x, t]) => (
      <text key={t} x={x} y={813} fill="#b0b0b0" fontSize="15" textAnchor="middle">{t}</text>
    ))}
    <path d="M1411 119.5h7V251h-7" fill="none" stroke="#b8b8b8" />
    <text transform="translate(1411 183) rotate(-90)" fill="#a8a8a8" fontSize="14.5" textAnchor="middle">100.0 pips</text>
  </ChartSvg>
);

const chartTabs = [
  { name: "XAUUSD", l: "m", n: "15", w: 330, tf: 66, first: true },
  { name: "EURUSD", l: "h", n: "1", blue: true, w: 334, tf: 63 },
  { name: "GBPJPY", l: "h", n: "1", w: 330, tf: 63 },
  { name: "EURUSD", l: "h", n: "1", blue: true, w: 333, tf: 63, on: true },
];

const rowsA: [string, string][] = [
  ["Base asset", "EUR"], ["Quote asset", "USD"], ["Min change", "0.00001"], ["Pip position", "4"],
  ["Lot size", "100 000 EUR"], ["Commission (per lot)", "3.00 USD"], ["P&L conversion fee rate", "—"],
  ["Min trade quantity", "0.01 Lots"], ["Max trade quantity", "100 Lots"], ["Min stop loss distance", "0.0 pips"],
  ["Min take profit distance", "0.0 pips"], ["Min guaranteed stop loss distance", "0.0 pips"],
  ["Guaranteed charge", "0.0 pips"],
];
const rowsB: [string, string][] = [
  ["3-day swaps", "Wednesday"], ["Buy positions", "0\u00a0\u00a0(0 Lots)"], ["Sell positions", "0\u00a0\u00a0(0 Lots)"],
];
const stats: [string, string, number, number?][] = [
  ["Balance:", "USD 1.18", 192], ["Equity:", "USD 1.18", 192], ["Margin:", "USD 0.00", 192],
  ["Free Margin:", "USD 1.18", 193], ["Margin Level:", "—", 191], ["Smart Stop Out:", "50.00%", 198, 9],
];
const heads: [string, number][] = [
  ["Symbol", 152], ["Quantity", 151], ["Direction", 151], ["Entry", 152], ["T/P", 152], ["S/L", 151],
];
const timeframes: [string, string][] = [
  ["m", "1"], ["m", "5"], ["m", "15"], ["m", "30"], ["h", "1"], ["h", "4"], ["D", "1"], ["W", "1"], ["M", "1"],
];

export default function App() {
  return (
    <Page>
      <GlobalStyle />
      <Rail>
        <RailCell><Burger /></RailCell>
        <RailCell $bg={GREEN}><Glyph n="railcandles" s={28} /></RailCell>
        <RailCell $bg="#4c4c4c"><Glyph n="pages" s={28} /></RailCell>
        <RailCell $bg="#4c4c4c"><Glyph n="robot" s={26} /></RailCell>
        <RailCell $bg="#4c4c4c"><Glyph n="analyze" s={30} /></RailCell>
        <RailBottom>
          <RailCell><Glyph n="atm" s={28} /></RailCell>
          <RailCell><Glyph n="wallet" s={28} /></RailCell>
          <RailCell><FaCog size={23} /></RailCell>
          <RailCell><CircleHelp size={26} strokeWidth={1.5} /></RailCell>
        </RailBottom>
      </Rail>
      <Main>
        <TopBar>
          <OutlineButton>New Order</OutlineButton>
          <ToolSep />
          <ToolIcon $w={38} $more><Glyph n="monitor" s={26} /></ToolIcon>
          <ToolSep />
          <ToolIcon $w={38} $more><Glyph n="layout" s={25} /></ToolIcon>
          <ToolSep />
          <ToolIcon $w={38}><Glyph n="grid" s={24} /></ToolIcon>
          <ToolIcon $w={38} $on><Glyph n="single" s={26} /></ToolIcon>
          <ToolIcon $w={37}><Glyph n="split" s={24} /></ToolIcon>
          <ToolSep />
          <ToolIcon $w={36}><Glyph n="chartadd" s={26} /></ToolIcon>
          <ToolSep />
          <ToolIcon $w={38}><Glyph n="zoomout" s={26} /></ToolIcon>
          <ToolIcon $w={37}><Glyph n="zoomin" s={26} /></ToolIcon>
          <ToolSep />
          <ToolIcon $w={39} $more><Glyph n="candles" s={26} /></ToolIcon>
          <ToolSep />
          <ToolIcon $w={38} $more><FaFacebook size={22} /></ToolIcon>
          <ToolSep />
          <ToolIcon $w={38} $more><Glyph n="layers" s={27} /></ToolIcon>
          <ToolIcon $w={37}><FaEye size={24} /></ToolIcon>
          <ToolSep />
          <ToolIcon $w={38} $more><Glyph n="chartgear" s={26} /></ToolIcon>
          <ToolSep />
          <TfRow>
            {timeframes.map(([l, n], i) => (
              <TfCell key={i}><Tf l={l} n={n} on={i === 4} /></TfCell>
            ))}
          </TfRow>
          <Dots>•••</Dots>
          <Account>
            <LiveDot />
            <AccountText>
              Pepperstone · <Link>Demo</Link> · 3340046 · 1:400
            </AccountText>
            <Caret $c="#b0b0b0" />
          </Account>
        </TopBar>
        <Body>
          <LeftColumn>
            <Upper>
              <ChartArea>
                <ChartTabs>
                  <Pager $left />
                  {chartTabs.map((t, i) => (
                    <ChartTab key={i} $w={t.w} $on={t.on} $first={t.first}>
                      <Grip $w={7} $h={22} />
                      <SymbolIcon $blue={t.blue}>
                        {t.blue ? "A" : <Glyph n="slash" s={19} />}
                      </SymbolIcon>
                      <TabName>
                        {t.name}
                        <Caret />
                      </TabName>
                      <TabSep />
                      <TabTf $w={t.tf}>
                        <Tf l={t.l} n={t.n} />
                        <Caret />
                      </TabTf>
                      <TabSep />
                      <TabIcon $w={34} $dim={!t.on}><Glyph n="signal" s={24} /></TabIcon>
                      <TabSep />
                      <TabIcon $w={38}><Glyph n="popout" s={14} /></TabIcon>
                      <TabIcon $w={8}><Glyph n="close" s={15} /></TabIcon>
                    </ChartTab>
                  ))}
                  <Pager />
                  <TabPlus>+</TabPlus>
                </ChartTabs>
                <ChartPanel>
                  <ChartCanvas>
                    <PriceChart />
                    <Quote $side="buy">
                      <span>1.1043<Tiny>0</Tiny></span>
                      <Glyph n="arrowne" s={13} />
                    </Quote>
                    <Quote $side="sell">
                      <Glyph n="arrowsw" s={13} />
                      <span>1.1043<Tiny>0</Tiny></span>
                    </Quote>
                    <QuoteBar $left={607} $w={109} $c={ORANGE} />
                    <QuoteBar $left={722} $w={101} $c={GREEN} />
                    <PriceTag>1.1043<Tiny>0</Tiny></PriceTag>
                    <TimeTip>
                      <Grip $w={8} $h={15} />
                      08:39
                    </TimeTip>
                  </ChartCanvas>
                  <HScroll>
                    <ScrollArrow $dir="l" />
                    <HThumb />
                    <ScrollArrow $dir="r" />
                  </HScroll>
                </ChartPanel>
              </ChartArea>
              <ToolColumn>
                <Grip $w={30} $h={8} />
                <ActiveTool><Glyph n="cursor" s={22} /></ActiveTool>
                <DrawTool><Glyph n="cross" /></DrawTool>
                <DrawTool><Glyph n="crossdense" /></DrawTool>
                <DrawTool><Glyph n="measure" /></DrawTool>
                <DrawSep />
                <DrawTool $more><Glyph n="line" s={26} /></DrawTool>
                <DrawTool><Glyph n="pencil" s={26} /></DrawTool>
                <DrawTool><Glyph n="fib" s={26} /></DrawTool>
                <DrawTool><Glyph n="fork" s={26} /></DrawTool>
                <DrawTool $more><Glyph n="gridf" s={26} /></DrawTool>
                <DrawTool $more><Glyph n="rect" s={25} /></DrawTool>
                <DrawTool $more><Glyph n="up" s={22} /></DrawTool>
                <DrawTool><Glyph n="text" s={22} /></DrawTool>
                <DrawSep />
                <Swatch />
                <DrawTool $more><Glyph n="marker" s={26} /></DrawTool>
                <DrawSep />
                <DrawTool><Glyph n="camera" s={25} /></DrawTool>
                <DrawSep />
                <DrawTool><Glyph n="bell" s={26} /></DrawTool>
              </ToolColumn>
            </Upper>
            <Splitter><i /><Caret $s={6} $c="#6a6a6a" /><i /></Splitter>
            <BottomTabs>
              <BottomTab $w={114} $on>Positions <Badge>0</Badge></BottomTab>
              <BottomTab $w={99}>Orders <Badge>0</Badge></BottomTab>
              <BottomTab $w={67}>History</BottomTab>
              <BottomTab $w={131}>Price Alerts <Badge>0</Badge></BottomTab>
              <BottomTab $w={109}>Transactions</BottomTab>
              <BottomTab $w={119} $end>
                Feedback
                <FeedbackIcon width="18" height="18" viewBox="0 0 20 22">
                  <path d="M1 1h18v12H7l-5 7V13H1z" fill="none" stroke="#bbb" strokeWidth="1.5" />
                  <rect x="3" y="3" width="7" height="7" fill="#e01818" />
                  <rect x="10" y="3" width="7" height="7" fill="#0a9648" />
                </FeedbackIcon>
              </BottomTab>
            </BottomTabs>
            <BottomPanel>
              <FilterBar>
                <DarkField $w={270}>
                  <span />
                  <SearchMark><Glyph n="search" s={22} /></SearchMark>
                </DarkField>
                <DarkField $w={225}>
                  All Directions (Default)
                  <Caret $s={9} />
                </DarkField>
                <DarkField $w={224}>
                  Not Aggregated (Default)
                  <Caret $s={9} />
                </DarkField>
                <GreenButton><Glyph n="neworder" s={24} />New Order</GreenButton>
                <CloseGroup>
                  <CloseLabel>Close (Disabled)</CloseLabel>
                  <CloseCaret><Caret $c="#fff" $s={11} /></CloseCaret>
                </CloseGroup>
              </FilterBar>
              <PositionsTable>
                <TableHead>
                  <HeadCell $w={267} $right>Created (UTC+0)</HeadCell>
                  {heads.map(([h, w]) => (
                    <HeadCell key={h} $w={w}>{h}</HeadCell>
                  ))}
                  <HeadCell $w={152} $last>Net USD</HeadCell>
                </TableHead>
              </PositionsTable>
              <Stats>
                {stats.map(([k, v, w, gap]) => (
                  <Stat key={k} $w={w} $gap={gap}>{k}<b>{v}</b></Stat>
                ))}
                <Stat $w={199} $last $gap={6}>Unr. Net P&amp;L:<b>USD 0.00</b></Stat>
                <StatGear><FaCog size={22} /></StatGear>
              </Stats>
            </BottomPanel>
          </LeftColumn>
          <Gutter><Grip $w={4} $h={42} /></Gutter>
          <RightColumn>
            <SideTabs>
              <SideTab $w={70} $on>Symbol</SideTab>
              <SideTab $w={50}>DoM</SideTab>
              <SideTab $w={82}>Calendar</SideTab>
              <SideTab $w={102}>Autochartist</SideTab>
              <SideTab $w={57}>News</SideTab>
            </SideTabs>
            <SidePanel>
              <SideHead>
                <SymbolSelect $w={276}>
                  EURUSD
                  <Caret $s={9} />
                </SymbolSelect>
                <SquareButton><Glyph n="share" s={22} /></SquareButton>
                <SquareButton><FaStar size={20} /></SquareButton>
                <SquareButton><Glyph n="chartbox" s={22} /></SquareButton>
                <SquareButton><Glyph n="bell" s={24} /></SquareButton>
              </SideHead>
              <ScrollWrap>
                <ScrollBody>
                  <Section $pull>
                    <SectionHead>
                      <SectionGrip $w={8} $h={30} />
                      Symbol Info
                      <Chevron><Glyph n="chevron" s={16} /></Chevron>
                    </SectionHead>
                    <SectionBody>
                      {rowsA.map(([k, v]) => (
                        <Row key={k}>{k}<b>{v}</b></Row>
                      ))}
                      <Highlight>
                        <Row $h={46}>
                          <RowLabel>Swap (long) <InfoBox>i</InfoBox></RowLabel>
                          <b>-0.82 pips</b>
                        </Row>
                        <Row $h={47.5}>
                          <RowLabel>Swap (short) <InfoBox>i</InfoBox></RowLabel>
                          <b>0.47 pips</b>
                        </Row>
                      </Highlight>
                      {rowsB.map(([k, v]) => (
                        <Row key={k}>{k}<b>{v}</b></Row>
                      ))}
                      <Row $flat>FIX symbol ID<b>1</b></Row>
                    </SectionBody>
                  </Section>
                  <Section>
                    <SectionHead>
                      <SectionGrip $w={8} $h={30} />
                      Inverted Rate
                      <Chevron><Glyph n="chevron" s={16} /></Chevron>
                    </SectionHead>
                    <SectionBody>
                      <RateGrid>
                        <span />
                        <span>Bid</span>
                        <span>Ask</span>
                        <RateName>USDEUR</RateName>
                        <Rate $c="#22aa33">0.905551</Rate>
                        <Rate $c={ORANGE}>0.905551</Rate>
                      </RateGrid>
                    </SectionBody>
                  </Section>
                  <Section>
                    <SectionHead>
                      <SectionGrip $w={8} $h={30} />
                      Market Hours
                      <Chevron><Glyph n="chevron" s={16} /></Chevron>
                    </SectionHead>
                    <SectionBody>
                      <HoursRow>
                        <HoursCell $w={49}>Sun</HoursCell>
                        <HoursCell $w={81}>21:01:00</HoursCell>
                        <HoursCell $w={24}>–</HoursCell>
                        <HoursCell $w={49}>Mon</HoursCell>
                        <HoursCell $w={81}>20:59:59</HoursCell>
                        <HoursCell>Closes in 16:08:38</HoursCell>
                        <HoursDot $c="#22aa33" />
                      </HoursRow>
                    </SectionBody>
                  </Section>
                </ScrollBody>
                <VScroll>
                  <ScrollArrow $dir="u" />
                  <VThumb />
                  <ScrollArrow $dir="d" />
                </VScroll>
              </ScrollWrap>
            </SidePanel>
          </RightColumn>
        </Body>
        <StatusBar>
          <LiveDot />
          <StatusText>Trading sessions: Tokyo, Sydney, Singapore</StatusText>
          <StatusRight>
            Current Time:
            <Hot $ml={13}>UTC+0</Hot>
            <ZoneCaret $s={9} />
            <Hot>04:51 08.05.2023</Hot>
            <StatusSep $l={8} $r={16} />
            <OnLabel>ON</OnLabel>
            <Toggle />
            <StatusSep $l={13} $r={15} />
            103ms&nbsp;&nbsp;/&nbsp;&nbsp;68ms
          </StatusRight>
        </StatusBar>
      </Main>
      <Overlay width="2160" height="1263" viewBox="0 0 2160 1263">
        <line x1="1354" y1="479" x2="1585" y2="680" stroke="#f00000" strokeWidth="4.5" />
        <polygon points="1598,691 1569,681 1585,664" fill="#f00000" />
      </Overlay>
    </Page>
  );
}
